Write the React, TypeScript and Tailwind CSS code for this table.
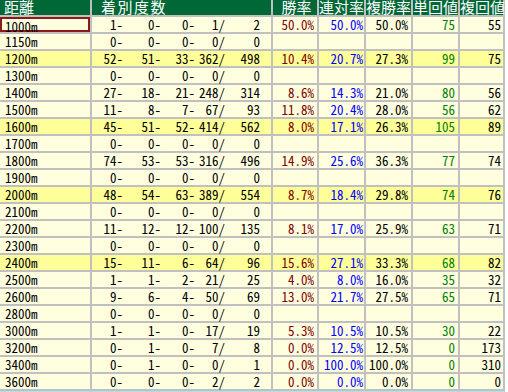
import React from "react";

type Row = {
  dist: string;
  rec: [string, string, string, string, string];
  win?: string;
  ren?: string;
  fuku?: string;
  tan?: string;
  fukuKai?: string;
  hl?: boolean;
};

const rows: Row[] = [
  { dist: "1000m", rec: ["1", "0", "0", "1", "2"], win: "50.0%", ren: "50.0%", fuku: "50.0%", tan: "75", fukuKai: "55" },
  { dist: "1150m", rec: ["0", "0", "0", "0", "0"] },
  { dist: "1200m", rec: ["52", "51", "33", "362", "498"], win: "10.4%", ren: "20.7%", fuku: "27.3%", tan: "99", fukuKai: "75", hl: true },
  { dist: "1300m", rec: ["0", "0", "0", "0", "0"] },
  { dist: "1400m", rec: ["27", "18", "21", "248", "314"], win: "8.6%", ren: "14.3%", fuku: "21.0%", tan: "80", fukuKai: "56" },
  { dist: "1500m", rec: ["11", "8", "7", "67", "93"], win: "11.8%", ren: "20.4%", fuku: "28.0%", tan: "56", fukuKai: "62" },
  { dist: "1600m", rec: ["45", "51", "52", "414", "562"], win: "8.0%", ren: "17.1%", fuku: "26.3%", tan: "105", fukuKai: "89", hl: true },
  { dist: "1700m", rec: ["0", "0", "0", "0", "0"] },
  { dist: "1800m", rec: ["74", "53", "53", "316", "496"], win: "14.9%", ren: "25.6%", fuku: "36.3%", tan: "77", fukuKai: "74" },
  { dist: "1900m", rec: ["0", "0", "0", "0", "0"] },
  { dist: "2000m", rec: ["48", "54", "63", "389", "554"], win: "8.7%", ren: "18.4%", fuku: "29.8%", tan: "74", fukuKai: "76", hl: true },
  { dist: "2100m", rec: ["0", "0", "0", "0", "0"] },
  { dist: "2200m", rec: ["11", "12", "12", "100", "135"], win: "8.1%", ren: "17.0%", fuku: "25.9%", tan: "63", fukuKai: "71" },
  { dist: "2300m", rec: ["0", "0", "0", "0", "0"] },
  { dist: "2400m", rec: ["15", "11", "6", "64", "96"], win: "15.6%", ren: "27.1%", fuku: "33.3%", tan: "68", fukuKai: "82", hl: true },
  { dist: "2500m", rec: ["1", "1", "2", "21", "25"], win: "4.0%", ren: "8.0%", fuku: "16.0%", tan: "35", fukuKai: "32" },
  { dist: "2600m", rec: ["9", "6", "4", "50", "69"], win: "13.0%", ren: "21.7%", fuku: "27.5%", tan: "65", fukuKai: "71" },
  { dist: "2800m", rec: ["0", "0", "0", "0", "0"] },
  { dist: "3000m", rec: ["1", "1", "0", "17", "19"], win: "5.3%", ren: "10.5%", fuku: "10.5%", tan: "30", fukuKai: "22" },
  { dist: "3200m", rec: ["0", "1", "0", "7", "8"], win: "0.0%", ren: "12.5%", fuku: "12.5%", tan: "0", fukuKai: "173" },
  { dist: "3400m", rec: ["0", "1", "0", "0", "1"], win: "0.0%", ren: "100.0%", fuku: "100.0%", tan: "0", fukuKai: "310" },
  { dist: "3600m", rec: ["0", "0", "0", "2", "2"], win: "0.0%", ren: "0.0%", fuku: "0.0%", tan: "0", fukuKai: "0" },
];

const font = "font-['Noto_Sans_CJK_JP',sans-serif]";
const cell = "h-[15px] pt-[1px] text-[13px] leading-[14px] whitespace-nowrap [font-feature-settings:'hwid']";
const head = "h-[15px] bg-[#006837] text-white text-[15px] leading-[14px] whitespace-nowrap";

export default function App() {
  return (
    <div className={`w-[508px] h-[392px] overflow-hidden bg-white ${font}`}>
      <div className="w-[505px] bg-[#c0c0c0] pr-[2px] pb-[2px]">
        <div className="grid grid-cols-[90px_179px_44px_45px_45px_45px_43px] gap-[2px]">
          <div className={`${head} pl-[4px]`}>距離</div>
          <div className={`${head} pl-[9px] tracking-[1.5px]`}>着別度数</div>
          <div className={`${head} text-center pl-[3px]`}>勝率</div>
          <div className={`${head} text-center`}>連対率</div>
          <div className={`${head} text-center`}>複勝率</div>
          <div className={`${head} text-center`}>単回値</div>
          <div className={`${head} text-center`}>複回値</div>

          {rows.map((r, i) => {
            const bg = r.hl ? "bg-[#ffff99]" : "bg-[#ffffe0]";
            return (
              <React.Fragment key={r.dist}>
                <div
                  className={`${cell} ${bg} text-black ${
                    i === 0 ? "border-2 border-[#8b1a1a] pl-[3px] pt-0 leading-[12px]" : "pl-[5px]"
                  }`}
                >
                  {r.dist}
                </div>
                <div className={`${cell} ${bg} flex text-black`}>
                  <span className="w-[31px] text-right">{r.rec[0]}-</span>
                  <span className="w-[38px] text-right">{r.rec[1]}-</span>
                  <span className="w-[34px] text-right">{r.rec[2]}-</span>
                  <span className="w-[30px] text-right">{r.rec[3]}/</span>
                  <span className="w-[35px] text-right">{r.rec[4]}</span>
                </div>
                <div className={`${cell} ${bg} text-right pr-[3px] text-[#800000]`}>{r.win}</div>
                <div className={`${cell} ${bg} text-right pr-[1px] text-[#0000ff]`}>{r.ren}</div>
                <div className={`${cell} ${bg} text-right pr-[3px] text-black`}>{r.fuku}</div>
                <div className={`${cell} ${bg} text-right pr-[3px] text-[#008000]`}>{r.tan}</div>
                <div className={`${cell} ${bg} text-right pr-[2px] text-black`}>{r.fukuKai}</div>
              </React.Fragment>
            );
          })}
        </div>
      </div>
      <div className="w-[505px] h-[2px] bg-[#a8e4ef]" />
    </div>
  );
}
